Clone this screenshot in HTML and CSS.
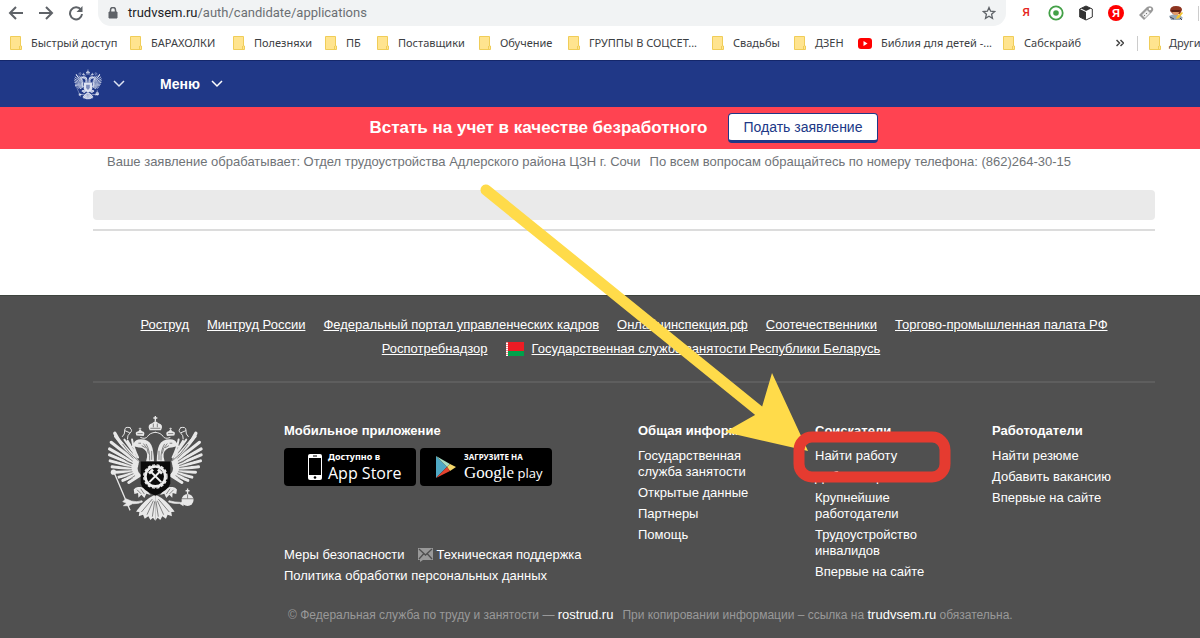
FILE: index.html
```html
<!DOCTYPE html>
<html lang="ru">
<head>
<meta charset="utf-8">
<meta name="viewport" content="width=device-width, initial-scale=1">
<title>Работа в России</title>
<link rel="stylesheet" href="styles.css">
</head>
<body>
<svg class="defs" aria-hidden="true">
  <defs>
    <symbol id="folder" viewBox="0 0 12 14"><path d="M.5.5h10v9.500h1v3.500H.5z" fill="#ffe48f" stroke="#f0cd58"/><path d="M9.500 10v3.500" stroke="#f0cd58"/></symbol>
    <g id="eagle-half">
      <g stroke-linecap="round" fill="none">
        <path d="M75 99Q92 135 141 182" stroke-width="10"/>
        <path d="M144 184L77 108M143 188L64 126M142 193L59 146M141 198L59 164M140 203L61 182M140 208L67 200M141 213L76 216M143 218L87 231M146 222L99 241M150 226L117 247" stroke-width="9"/>
        <path d="M104 118L128 152M114 122L134 158M127 118Q130 140 145 172M120 132L138 172" stroke-width="6"/>
        <path d="M130 174L71 115M128 182L60 135M126 189L58 155M124 196L59 173M124 202L63 192M125 209L71 209M127 215L80 224M130 221L92 237M135 227L108 245" stroke="var(--backdrop)" stroke-width="2"/>
        <path d="M99 132Q118 162 146 182M104 178Q112 186 128 190" stroke="var(--backdrop)" stroke-width="2"/>
        <path d="M197 96Q180 98 174 108T153 112" stroke-width="3"/>
        <path d="M121 82Q104 78 105 90T98 109M121 83Q130 91 121 98T113 116M105 91L119 97" stroke-width="3"/>
      </g>
      <path d="M124 140L132 129Q137 117 153 117Q177 117 185 134Q192 148 193 184L169 184Q178 158 164 148Q157 141 147 142L135 139Q128 144 124 140z"/>
      <path d="M146 129h8M169 131Q181 149 180 181M161 130Q176 145 176 160M186 152v27M156 136L168 143" stroke="var(--backdrop)" stroke-width="2" fill="none"/>
      <path d="M140 106Q134 94 146 93L151 87L157 93Q168 95 162 107z"/><path d="M151 82v9M147 85h8" stroke-width="2"/>
      <path d="M143 100h16" stroke="var(--backdrop)" stroke-width="2"/>
      <path d="M132 268Q138 258 150 261Q162 259 171 270L183 285L170 281L164 294L155 284L146 293L145 279L134 282z"/>
      <path d="M142 269l12 12M153 266l11 16" stroke="var(--backdrop)" stroke-width="2"/>
      <path d="M190 287Q163 300 139 335L149 336L147 349L160 344L165 356L176 349L182 360L190 353L197 362V284z"/>
      <path d="M188 297L155 336M191 302L172 344M195 304L188 350" stroke="var(--backdrop)" stroke-width="2" fill="none"/>
    </g>
    <symbol id="eagle" viewBox="52 44 291 319">
      <g fill="currentColor" stroke="currentColor" stroke-width="0">
        <use href="#eagle-half"/>
        <use href="#eagle-half" transform="translate(394 0) scale(-1 1)"/>
        <path d="M180 90Q171 74 187 69L197 62L207 69Q223 74 214 90z"/>
        <path d="M197 47v16M191 53h12" stroke-width="4"/>
        <path d="M182 84h30M191 70v11M203 70v11" stroke="var(--backdrop)" stroke-width="2"/>
        <path d="M72 215L121 331" stroke="var(--backdrop)" stroke-width="8"/>
        <path d="M72 215L121 331" stroke-width="4"/><circle cx="71" cy="216" r="8"/>
        <path d="M157 302Q142 307 125 303L108 296L99 305L111 309L101 317L117 317L128 311Q145 312 158 306z" stroke-width="2"/>
        <path d="M238 302Q256 307 274 307L281 303V317L270 310Q250 312 237 306z" stroke-width="2"/>
        <circle cx="294" cy="300" r="18"/><path d="M294 265v20M288 272h12" stroke-width="4"/>
        <path d="M277 296h34M294 283v12" stroke="var(--backdrop)" stroke-width="2"/>
      </g>
    </symbol>
    <symbol id="chevron" viewBox="0 0 12 8"><path d="M1 1l5 5 5-5" fill="none" stroke="currentColor" stroke-width="1.500"/></symbol>
  </defs>
</svg>

<div class="browser">
  <div class="toolbar">
    <button class="tool" aria-label="Назад"><svg width="16" height="16" viewBox="0 0 16 16"><path d="M15 8H2M8 2L2 8l6 6"/></svg></button>
    <button class="tool" aria-label="Вперёд"><svg width="16" height="16" viewBox="0 0 16 16"><path d="M1 8h13M8 2l6 6-6 6"/></svg></button>
    <button class="tool" aria-label="Обновить"><svg width="16" height="16" viewBox="0 0 16 16"><path d="M13 5A6 6 0 1 0 14 9"/><path d="M14.500 1v6H8.500z" fill="#5f6368" stroke="none"/></svg></button>
    <div class="address">
      <svg width="10" height="12" viewBox="0 0 10 12"><path d="M1 5h8v6H1z" fill="#5f6368" stroke="#5f6368"/><path d="M2.500 5V3a2.500 2.500 0 0 1 5 0v2" fill="none" stroke="#5f6368" stroke-width="1.500"/></svg>
      <span class="url"><b>trudvsem.ru</b>/auth/candidate/applications</span>
      <button class="tool" aria-label="Добавить в закладки"><svg width="14" height="14" viewBox="0 0 14 14"><path d="M7 1.500l1.600 3.700 4 .4-3 2.700.9 4L7 10.200l-3.500 2.100.9-4-3-2.700 4-.4z" stroke-width="1.300"/></svg></button>
    </div>
    <div class="extensions">
      <span class="ya">Я</span>
      <svg width="16" height="16" viewBox="0 0 16 16"><circle cx="8" cy="8" r="6.700" fill="#fff" stroke="#43a047" stroke-width="1.800"/><circle cx="8" cy="8" r="2.800" fill="#43a047"/></svg>
      <svg width="16" height="16" viewBox="0 0 16 16"><path d="M8 1l6.300 3v8L8 15l-6.300-3V4z" fill="#fff" stroke="#333"/><path d="M1.700 4L8 7v8l-6.300-3zM3 3.500L8 1l5 2.500L8 6z" fill="#333"/></svg>
      <span class="ya ya-round">Я</span>
      <svg width="16" height="16" viewBox="0 0 16 16"><path d="M1 10l8-8q4-2 6 1 1 2-1 4l-8 8z" fill="#999"/><path d="M4 10l5-5 3 3-5 5z" fill="#eee"/><circle cx="12" cy="4" r="1.300" fill="#fff"/><path d="M6 10l1 1M8 8l1 1" stroke="#777"/></svg>
      <svg width="16" height="16" viewBox="0 0 16 16"><path d="M1 11l5-2 6 1 3 3-3 2H3z" fill="#9aaab8"/><path d="M2 6q0-5 6-5t6 4l-2 4H5z" fill="#8d3420"/><path d="M4 7h7l-1 3H6z" fill="#e19b6b"/><path d="M3 5h10l-2 2H4z" fill="#5a2014"/><path d="M8 14l1-3 5-4 1 1-4 5z" fill="#f5c52c"/><path d="M2 12l4 2M12 13l2 2" stroke="#445"/></svg>
      <i class="divider"></i>
    </div>
  </div>
  <nav class="bookmarks" aria-label="Закладки">
    <a href="#"><svg><use href="#folder"/></svg>Быстрый доступ</a>
    <a href="#"><svg><use href="#folder"/></svg>БАРАХОЛКИ</a>
    <a href="#"><svg><use href="#folder"/></svg>Полезняхи</a>
    <a href="#"><svg><use href="#folder"/></svg>ПБ</a>
    <a href="#"><svg><use href="#folder"/></svg>Поставщики</a>
    <a href="#"><svg><use href="#folder"/></svg>Обучение</a>
    <a href="#"><svg><use href="#folder"/></svg>ГРУППЫ В СОЦСЕТ...</a>
    <a href="#"><svg><use href="#folder"/></svg>Свадьбы</a>
    <a href="#"><svg><use href="#folder"/></svg>ДЗЕН</a>
    <a href="#"><svg class="video" viewBox="0 0 14 11"><rect width="14" height="11" rx="3" fill="#f00"/><path d="M5.500 3v5l4-2.500z" fill="#fff"/></svg>Библия для детей -...</a>
    <a href="#"><svg><use href="#folder"/></svg>Сабскрайб</a>
    <button class="more" aria-label="Другие закладки"><svg width="8" height="8" viewBox="0 0 8 8"><path d="M.5 1l3 3-3 3M4.500 1l3 3-3 3" fill="none" stroke="#444" stroke-width="1.500"/></svg></button>
    <a href="#" class="other"><svg><use href="#folder"/></svg>Други</a>
  </nav>
</div>

<header class="site-bar">
  <button class="crest" aria-label="Портал"><svg width="28" height="31" viewBox="52 44 291 319"><use href="#eagle" x="52" y="44" width="291" height="319"/><path d="M153 184h89v66q-3 18-45 37-41-19-44-37z" fill="currentColor"/><path d="M178 205h38v36l-19 20-19-20z" fill="#7f8dbd"/></svg><svg width="12" height="8"><use href="#chevron"/></svg></button>
  <button class="menu">Меню <svg width="12" height="8"><use href="#chevron"/></svg></button>
</header>

<section class="banner">
  <strong>Встать на учет в качестве безработного</strong>
  <button class="apply">Подать заявление</button>
</section>

<main class="content">
  <p class="notice"><span>Ваше заявление обрабатывает: Отдел трудоустройства Адлерского района ЦЗН г. Сочи</span><span>По всем вопросам обращайтесь по номеру телефона: (862)264-30-15</span></p>
  <div class="panel"></div>
  <hr>
</main>

<footer class="footer">
  <div class="partners">
    <a href="#">Роструд</a><a href="#">Минтруд России</a><a href="#">Федеральный портал управленческих кадров</a><a href="#">Онлайнинспекция.рф</a><a href="#">Соотечественники</a><a href="#">Торгово-промышленная палата РФ</a>
  </div>
  <div class="partners second">
    <a href="#">Роспотребнадзор</a>
    <span class="flagged"><svg width="18" height="14" viewBox="0 0 18 14"><path d="M0 0h18v14H0z" fill="#ed1c24"/><path d="M2 9h16v5H2z" fill="#00a14b"/><path d="M0 0h2v14H0z" fill="#fff"/><path d="M1 0v14" stroke="#ed1c24" stroke-dasharray="1 1"/></svg><a href="#">Государственная служба занятости Республики Беларусь</a></span>
  </div>
  <div class="columns">
    <div><svg class="emblem" viewBox="52 44 291 319"><use href="#eagle" x="52" y="44" width="291" height="319"/><path d="M153 184h89v66q-3 18-45 37-41-19-44-37z" fill="#0a0a0a"/><circle cx="197" cy="229" r="30" fill="none" stroke="#eee" stroke-width="8"/><circle cx="197" cy="229" r="35" fill="none" stroke="#eee" stroke-width="4" stroke-dasharray="9 5"/><path d="M179 246l32-32M215 246l-32-32" stroke="#eee" stroke-width="6"/><path d="M178 220l12-12M205 208l12 12" stroke="#eee" stroke-width="8"/></svg></div>
    <div class="mobile">
      <h2>Мобильное приложение</h2>
      <div class="stores">
        <a href="#" class="store apple"><svg width="14" height="26" viewBox="0 0 14 26"><rect width="14" height="26" rx="2" fill="#fff"/><path d="M1 4h12v17H1z" fill="#000"/><path d="M5 2h4" stroke="#000"/><circle cx="7" cy="23.500" r="1.300" fill="#000"/></svg><span><small>Доступно в</small><span class="name">App Store</span></span></a>
        <a href="#" class="store google"><svg width="20" height="22" viewBox="0 0 20 22"><path d="M0 0v22l11-11z" fill="#4fa8c4"/><path d="M0 0l14 8-3 3z" fill="#a8dcc0"/><path d="M14 8l6 3-6 4-3-4z" fill="#f5d76a"/><path d="M0 22l11-11 3 4z" fill="#e4432f"/></svg><span><small>ЗАГРУЗИТЕ НА</small><span class="name"><em>Google</em> play</span></span></a>
      </div>
      <div class="support"><a href="#">Меры безопасности</a><a href="#" class="mail"><svg width="15" height="14" viewBox="0 0 15 14"><path d="M0 0h15v12H5l-3 2v-2H0z" fill="#999"/><path d="M1 1l6.500 6L14 1M1 11l4.500-5M14 11L9.500 6" fill="none" stroke="#505050" stroke-width="1.300"/></svg>Техническая поддержка</a><a href="#">Политика обработки персональных данных</a></div>
    </div>
    <nav><h2>Общая информация</h2><a href="#">Государственная служба занятости</a><a href="#">Открытые данные</a><a href="#">Партнеры</a><a href="#">Помощь</a></nav>
    <nav><h2>Соискатели</h2><a href="#">Найти работу</a><a href="#">Добавить резюме</a><a href="#">Крупнейшие работодатели</a><a href="#">Трудоустройство инвалидов</a><a href="#">Впервые на сайте</a></nav>
    <nav><h2>Работодатели</h2><a href="#">Найти резюме</a><a href="#">Добавить вакансию</a><a href="#">Впервые на сайте</a></nav>
  </div>
  <p class="copyright"><span>© Федеральная служба по труду и занятости — <a href="#">rostrud.ru</a></span><span>При копировании информации – ссылка на <a href="#">trudvsem.ru</a> обязательна.</span></p>
</footer>

<svg class="annotation" width="480" height="310" viewBox="476 180 480 310" aria-hidden="true">
  <path d="M486 190L759 411" stroke="#ffdb4a" stroke-width="11" stroke-linecap="round"/>
  <path d="M772 373L808 451L725 432L755 415L762 407z" fill="#ffdb4a"/>
  <rect x="799" y="437" width="146" height="40" rx="13" fill="none" stroke="#e53b30" stroke-width="11"/>
</svg>
</body>
</html>
```
FILE: styles.css
```css
* { box-sizing: border-box; }
html, body { min-height: 100%; }
body {
  position: relative;
  display: flex;
  flex-direction: column;
  min-height: 100vh;
  margin: 0;
  overflow-x: hidden;
  background: #fff;
  font: 13px/16px "Liberation Sans", Arial, sans-serif;
}
a { color: inherit; text-decoration: none; }
button { padding: 0; border: 0; background: none; color: inherit; font: inherit; }
svg { display: block; flex: none; }
.defs { position: absolute; width: 0; height: 0; }

.browser { height: 60px; overflow: hidden; }
.toolbar { display: flex; align-items: center; height: 26px; padding-left: 8px; }
.tool { margin-right: 14px; }
.tool svg { fill: none; stroke: #5f6368; stroke-width: 2; }
.address {
  display: flex;
  flex: 1;
  align-items: center;
  gap: 10px;
  height: 26px;
  padding: 0 10px;
  border-radius: 0 0 13px 13px;
  background: #f1f3f4;
}
.address .tool { margin: 0; }
.url { flex: 1; color: #6b6f73; font: 13px/16px Roboto, sans-serif; }
.url b { color: #202124; font-weight: 400; }
.extensions { display: flex; align-items: center; gap: 14px; margin-left: 12px; }
.ya { width: 16px; color: #e52620; font: bold 10px/16px "Liberation Sans", sans-serif; text-align: center; }
.ya-round { border-radius: 50%; background: #f00; color: #fff; font-size: 11px; }
.divider { width: 2px; height: 15px; border-left: 1px solid #ccc; }

.bookmarks {
  display: grid;
  grid-template-columns: 120px 103px 92px 52px 102px 89px 144px 82px 64px 145px 100px 1fr 63px;
  align-items: center;
  height: 34px;
  padding-left: 10px;
  color: #3c4043;
  font: 11px/16px "Noto Sans", sans-serif;
  white-space: nowrap;
}
.bookmarks a { display: flex; align-items: center; gap: 9px; }
.bookmarks a svg { width: 12px; height: 14px; }
.bookmarks a .video { width: 14px; height: 11px; }
.more { justify-self: center; }
.bookmarks .other { height: 15px; gap: 8px; padding-left: 11px; border-left: 1px solid #ccc; }

.site-bar {
  --backdrop: #203887;
  display: flex;
  align-items: center;
  gap: 35px;
  height: 47px;
  padding-left: 74px;
  border-top: 1px solid #14276b;
  background: #203887;
  color: #fff;
}
.site-bar button { display: flex; align-items: center; gap: 11px; }
.crest { color: #dfe4f3; }
.menu { font-size: 14px; font-weight: 700; }

.banner {
  display: flex;
  align-items: center;
  justify-content: center;
  gap: 20px;
  min-height: 42px;
  padding: 0 45px 0 93px;
  background: #ff4351;
  color: #fff;
}
.banner strong { font-size: 17px; line-height: 20px; }
.banner .apply {
  height: 30px;
  padding: 0 15px;
  border: 1px solid #203887;
  border-bottom-width: 3px;
  border-radius: 4px;
  background: #fff;
  color: #203887;
  font-size: 14px;
}

.content { padding: 0 45px 0 93px; }
.notice { display: flex; gap: 9px; margin: 0; padding: 5px 14px 20px; color: #6f7377; white-space: nowrap; }
.panel { height: 30px; border-radius: 4px; background: #eaeaea; }
.content hr { height: 2px; margin: 9px 0 64px; border: 0; background: #dcdcdc; }

.footer { --backdrop: #505050; flex: 1; padding: 21px 45px 14px 93px; border-top: 1px solid #3e443e; background: #505050; color: #fff; }
.partners { display: flex; flex-wrap: wrap; justify-content: center; gap: 8px 18px; }
.partners a { text-decoration: underline; }
.second { margin-top: 8px; padding: 0 0 24px 14px; }
.flagged { display: flex; align-items: center; gap: 8px; }
.columns { display: grid; grid-template-columns: 2fr 4fr 2fr 2fr 2fr; border-top: 2px solid #5e5e5e; padding-top: 40px; }
.columns > * { min-width: 0; padding: 0 14px; }
.emblem { width: 97px; height: 106px; margin-top: -8px; color: #e8e8e8; }
.columns h2 { margin: 0 0 9px; font-size: 13px; line-height: 16px; white-space: nowrap; }
.columns nav a { display: block; margin-bottom: 5px; }
.columns nav a:last-child { margin-bottom: 4px; }
.stores { display: flex; gap: 4px; }
.store { display: flex; align-items: center; width: 132px; height: 38px; border-radius: 4px; background: #000; white-space: nowrap; }
.store small { display: block; font: bold 8px/12px "Noto Sans", sans-serif; }
.store .name { display: block; height: 20px; line-height: 20px; }
.apple { gap: 6px; padding-left: 24px; font: 16px/20px "Open Sans", sans-serif; }
.apple small { font-size: 9px; }
.google { gap: 8px; padding-left: 16px; font: 13px/20px "Open Sans", sans-serif; }
.google em { font: 17px/20px "Liberation Serif", serif; }
.support { display: flex; flex-wrap: wrap; gap: 5px 13px; margin-top: 61px; }
.mail { display: flex; align-items: center; gap: 4px; }
.copyright { display: flex; gap: 9px; margin: 23px 0 0; padding-left: 195px; color: #999; font-size: 12px; white-space: nowrap; }
.copyright a { color: #fff; font-size: 13px; }

.annotation { position: absolute; top: 180px; left: 476px; pointer-events: none; }
```
